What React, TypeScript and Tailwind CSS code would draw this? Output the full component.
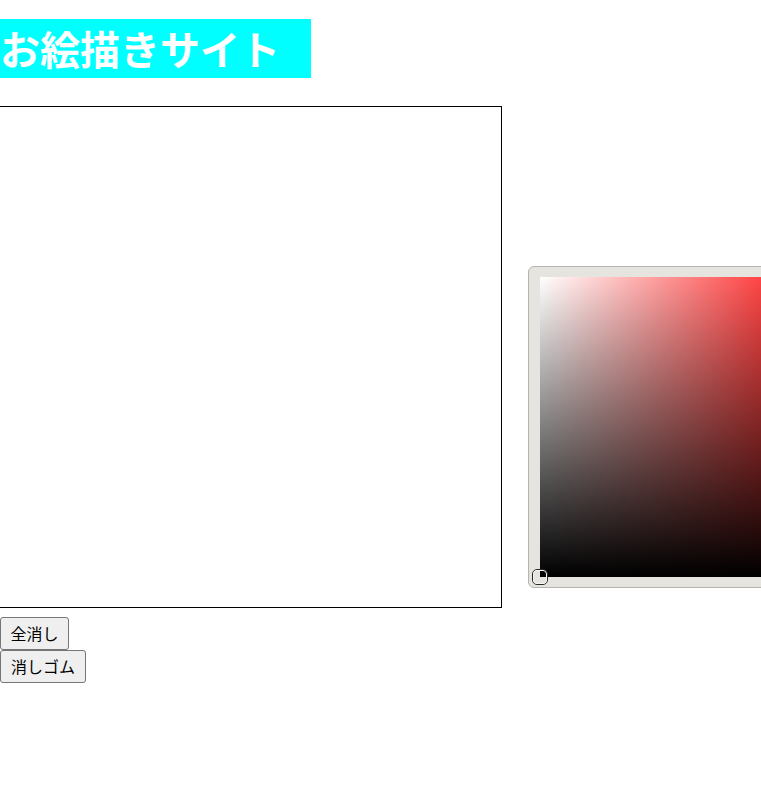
const jp = "font-['Noto_Sans_CJK_JP','Noto_Sans',sans-serif]"

function ColorPicker() {
  return (
    <div className="mb-[20px] ml-[26px] shrink-0 rounded-[6px] border border-[#b5b3ad] bg-[#e6e4df] px-[11px] py-[10px]">
      <div className="relative h-[300px] w-[300px] bg-[linear-gradient(to_right,#ffffff,#ff3a3a_78%,#ff3030)]">
        <div className="absolute inset-0 bg-[linear-gradient(to_bottom,rgba(0,0,0,0),rgba(0,0,0,0.55)_55%,#000000)]" />
        <div className="absolute -bottom-[8px] -left-[8px] h-[16px] w-[16px] rounded-[5px] border-[1.5px] border-[#2a2a2a]">
          <div className="h-full w-full rounded-[4px] border border-[#f4f4f4]" />
        </div>
      </div>
    </div>
  )
}

export default function App() {
  return (
    <div className={`min-h-[785px] w-[761px] overflow-hidden bg-white ${jp}`}>
      <h1 className="mt-[19px] h-[59px] w-[311px] bg-[#00ffff] text-[40px] font-bold leading-[59px] text-white">
        お絵描きサイト
      </h1>

      <div className="mt-[28px] flex items-end">
        <div className="-ml-px h-[502px] w-[503px] shrink-0 border border-black bg-white" />
        <ColorPicker />
      </div>

      <div className="mt-[9px] flex flex-col items-start">
        <button className="h-[33px] w-[69px] rounded-[3px] border border-[#767676] bg-[#efefef] text-[16px] leading-[23px] text-black">
          全消し
        </button>
        <button className="h-[33px] w-[86px] rounded-[3px] border border-[#767676] bg-[#efefef] text-[16px] leading-[23px] text-black">
          消しゴム
        </button>
      </div>
    </div>
  )
}
